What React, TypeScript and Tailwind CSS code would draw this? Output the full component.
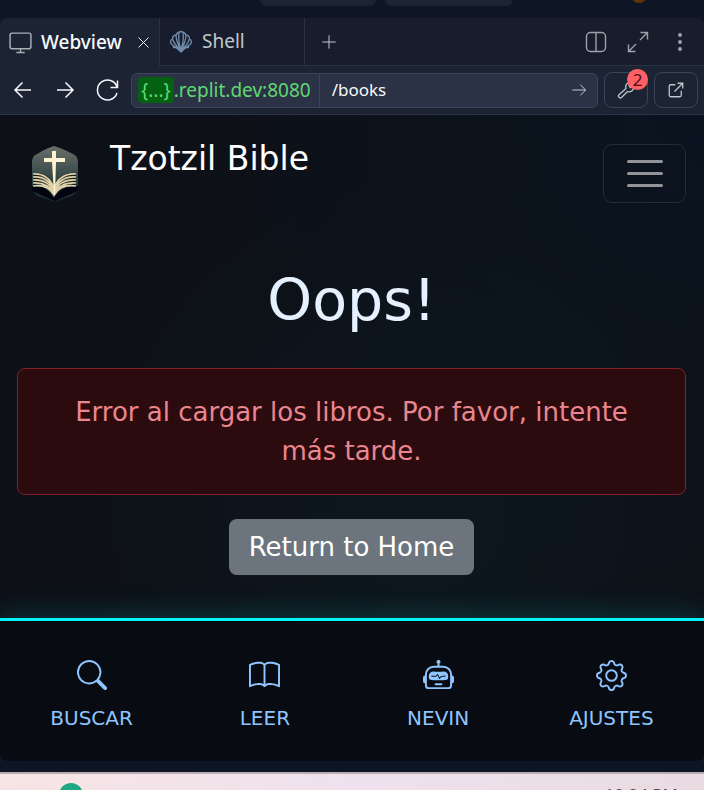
import type { ReactNode } from "react";
import { BsBook, BsGear, BsRobot, BsSearch } from "react-icons/bs";

const navItems = [
  { label: "BUSCAR", icon: <BsSearch size={30} /> },
  { label: "LEER", icon: <BsBook size={31} /> },
  { label: "NEVIN", icon: <BsRobot size={31} /> },
  { label: "AJUSTES", icon: <BsGear size={31} /> },
];

function Line({ size, children, width = 1.5 }: { size: number; children: ReactNode; width?: number }) {
  return (
    <svg
      width={size}
      height={size}
      viewBox="0 0 24 24"
      fill="none"
      stroke="currentColor"
      strokeWidth={width}
      aria-hidden="true"
      className="shrink-0"
    >
      {children}
    </svg>
  );
}

function ShellIcon() {
  return (
    <svg width="24" height="24" viewBox="0 0 24 24" fill="none" stroke="#718bab" strokeWidth="1.3" strokeLinejoin="round" aria-hidden="true" className="shrink-0">
      <path d="M12 21.500 7 17.500 4.500 17.500 4.500 15.500 Q1.500 14 1.500 11.500 Q2 9.500 3.500 9 Q3.500 5.500 7 5 Q8.500 2 12 1.500 Q15.500 2 17 5 Q20.500 5.500 20.500 9 Q22 9.500 22.500 11.500 Q22.500 14 19.500 15.500 V17.500 H17Z" />
      <path d="M11 20 4.500 15.500M11 19 Q5 14 3.500 9M11.500 19 Q7 11 7 5M11.500 18 Q9 10 10 3M12.500 18 Q15 10 14 3M12.500 19 Q17 11 17 5M13 19 Q19 14 20.500 9M13 20 19.500 15.500" />
      <path d="m8 18 4 4 4-4Z" fill="#718bab" />
    </svg>
  );
}

function BibleLogo() {
  return (
    <svg width="50" height="58" viewBox="0 0 50 58" aria-label="Tzotzil Bible" role="img" className="shrink-0">
      <defs>
        <linearGradient id="cover" x1="0" y1="0" x2="0" y2="1">
          <stop offset="0" stopColor="#697069" />
          <stop offset="0.5" stopColor="#3a4b4c" />
          <stop offset="1" stopColor="#10252c" />
        </linearGradient>
      </defs>
      <path d="M24 2 Q29 3 43 10 Q48 12 48 18 V47 L42 52 L25 58 L7 52 L2 46 V18 Q2 12 7 10 Q19 3 24 2Z" fill="url(#cover)" />
      <path d="M2 42 Q15 40 24 54 Q33 40 48 42 V47 L25 57 L2 47Z" fill="#02050f" />
      <path d="M3 29 Q19 27 24 43 Q30 27 46 29 V43 Q31 39 24 52 Q17 39 3 43Z" fill="#17211f" />
      <path d="M3 30 Q18 29 24 44 Q30 29 46 30M3 33 Q18 32 24 46 Q30 32 46 33M3 36 Q18 35 24 48 Q30 35 46 36M3 39 Q18 38 24 50 Q30 38 46 39M3 42 Q18 40 24 51 Q30 40 46 42" fill="none" stroke="#dfd1a9" strokeWidth="1.700" />
      <path d="M22 7h4v7h9v4h-9l-1 33h-1l-2-33h-8v-4h8Z" fill="#fff3cf" />
    </svg>
  );
}

function TabBar() {
  return (
    <div className="flex h-12 bg-[#171d2d] text-[19px] text-[#c2c8cc]">
      <div className="flex w-[159px] items-center bg-[#1c2333] pl-2 text-[#f5f9fc]">
        <button type="button" className="flex items-center gap-2 font-medium">
          <span className="text-[#a9afb5]">
            <Line size={25} width={1.4}>
              <rect x="2" y="3" width="20" height="15" rx="2" />
              <path d="M12 18v3M8 21.500h8" />
            </Line>
          </span>
          Webview
        </button>
        <button type="button" aria-label="Close tab" className="ml-auto pr-2">
          <Line size={15}>
            <path d="m4 4 16 16M20 4 4 20" />
          </Line>
        </button>
      </div>
      <button type="button" className="flex w-[146px] items-center gap-[9px] border-x border-b border-[#2b3245] pl-[9px]">
        <ShellIcon />
        Shell
      </button>
      <div className="flex flex-1 items-center gap-5 border-b border-[#2b3245] pr-3 pl-4">
        <button type="button" aria-label="New tab" className="mr-auto">
          <Line size={16}>
            <path d="M12 2v20M2 12h20" />
          </Line>
        </button>
        <div className="flex items-center gap-[18px] text-[#9da2a6]">
          <button type="button" aria-label="Split pane">
            <Line size={24} width={1.4}>
              <rect x="2.500" y="2.500" width="19" height="19" rx="4" />
              <path d="M12 2.500v19" />
            </Line>
          </button>
          <button type="button" aria-label="Maximize">
            <Line size={24} width={1.4}>
              <path d="M14.500 2.500h7v7M21.500 2.500 14 10M2.500 14.500v7h7M2.500 21.500 10 14" />
            </Line>
          </button>
          <button type="button" aria-label="More options">
            <svg width="24" height="24" viewBox="0 0 24 24" fill="currentColor" aria-hidden="true">
              <circle cx="12" cy="5" r="2" />
              <circle cx="12" cy="12" r="2" />
              <circle cx="12" cy="19" r="2" />
            </svg>
          </button>
        </div>
      </div>
    </div>
  );
}

function AddressBar() {
  return (
    <div className="flex h-[49px] items-center border-b border-[#2b3245] bg-[#1c2333] px-[6px] text-[#f5f9fc]">
      <div className="mr-3 flex gap-[18px] pl-[5px]">
        <button type="button" aria-label="Back">
          <Line size={24}>
            <path d="M20 12H4M11.500 4.500 4 12l7.500 7.500" />
          </Line>
        </button>
        <button type="button" aria-label="Forward">
          <Line size={24}>
            <path d="M4 12h16M12.500 4.500 20 12l-7.500 7.500" />
          </Line>
        </button>
        <button type="button" aria-label="Reload">
          <Line size={24}>
            <path d="M22.500 2.500v7h-7M22 9A10 10 0 1 0 22 15" />
          </Line>
        </button>
      </div>
      <div className="flex h-[35px] min-w-0 flex-1 items-center rounded-md border border-[#3c445c] bg-[#2b3245]">
        <span className="flex h-full items-center border-r border-[#3c445c] pr-2 pl-[6px] text-[19px] text-[#5fd873]">
          <span className="rounded bg-[#036111] px-[3px] leading-[26px]">{"{...}"}</span>.replit.dev:8080
        </span>
        <input aria-label="Path" defaultValue="/books" className="min-w-0 flex-1 bg-transparent px-3 text-[17px] outline-none" />
        <button type="button" aria-label="Go" className="px-[10px] text-[#c2c8cc]">
          <Line size={16}>
            <path d="M2 12h20M14 4l8 8-8 8" />
          </Line>
        </button>
      </div>
      <button type="button" aria-label="Developer tools" className="relative ml-[6px] flex h-9 w-11 items-center justify-center rounded-lg border border-[#3c445c] text-[#c2c8cc]">
        <Line size={18} width={1.7}>
          <path d="M3 18 12 10a6 6 0 0 1 7-8l-3 4 2 3 4-2a6 6 0 0 1-8 7L6 22a2.500 2.500 0 0 1-3-4Z" />
        </Line>
        <span className="absolute -top-1 -right-px flex h-[21px] w-[21px] items-center justify-center rounded-full bg-[#ff6166] text-[17px] text-[#520b0e]">2</span>
      </button>
      <button type="button" aria-label="Open in new window" className="ml-[6px] flex h-9 w-11 items-center justify-center rounded-lg border border-[#3c445c] text-[#c2c8cc]">
        <Line size={18} width={1.7}>
          <path d="M11 5H5a2 2 0 0 0-2 2v12a2 2 0 0 0 2 2h12a2 2 0 0 0 2-2v-6M10 14 21 3M14 3h7v7" />
        </Line>
      </button>
    </div>
  );
}

export default function App() {
  return (
    <div className="flex h-screen flex-col overflow-hidden bg-[#0e1525] font-['Noto_Sans',sans-serif]">
      <div className="flex h-[18px] items-start justify-end gap-[9px] overflow-hidden pr-[57px]">
        <div className="h-[6px] w-[116px] rounded-b-md bg-[#1c2333]" />
        <div className="h-[6px] w-32 rounded-b-md bg-[#1c2333]" />
        <div className="-mt-[13px] ml-[109px] h-4 w-4 rounded-full bg-[#633506]" />
      </div>
      <section className="flex flex-1 flex-col overflow-hidden rounded-lg">
        <TabBar />
        <AddressBar />
        <main className="flex flex-1 flex-col bg-[#0d1017] bg-[radial-gradient(circle_at_100%_0%,#0a1420,transparent_50%),radial-gradient(circle_at_60%_60%,#0d181e,transparent_60%)] font-['DejaVu_Sans',sans-serif]">
          <header className="flex items-start pt-[29px] pr-[18px] pl-[30px]">
            <BibleLogo />
            <span className="ml-[30px] text-[33px] leading-[30px] text-white">Tzotzil Bible</span>
            <button type="button" aria-label="Menu" className="ml-auto flex h-[59px] w-[83px] flex-col items-center justify-center gap-[9px] rounded-[9px] border border-[#282b31]">
              <span className="h-[3px] w-9 rounded-full bg-[#929498]" />
              <span className="h-[3px] w-9 rounded-full bg-[#929498]" />
              <span className="h-[3px] w-9 rounded-full bg-[#929498]" />
            </button>
          </header>
          <div className="flex flex-1 flex-col items-center pt-[63px] pr-[18px] pl-[17px] text-center">
            <h1 className="text-[57px] leading-[68px] text-[#e6f1ff]">Oops!</h1>
            <p role="alert" className="mt-[34px] w-full rounded-lg border border-[#842029] bg-[#2c0b0e] px-12 pt-6 pb-[23px] text-[26px] leading-[39px] text-[#ea868f]">
              Error al cargar los libros. Por favor, intente más tarde.
            </p>
            <a href="#home" className="mt-6 rounded-lg bg-[#6c757d] px-5 text-[26px] leading-[56px] text-white">
              Return to Home
            </a>
          </div>
          <nav className="flex border-t-[3px] border-[#00f3ff] bg-[#080b12] pt-[38px] pr-[6px] pb-[30px] pl-[5px] shadow-[0_0_30px_rgba(0,243,255,0.2)]">
            {navItems.map((item) => (
              <a key={item.label} href={"#" + item.label.toLowerCase()} className="flex flex-1 flex-col items-center text-[20px] text-[#8ec5ff]">
                <span className="flex h-8 items-center">{item.icon}</span>
                <span className="mt-[14px] leading-[26px]">{item.label}</span>
              </a>
            ))}
          </nav>
        </main>
      </section>
      <footer className="mt-[11px] flex h-[18px] items-start justify-between overflow-hidden border-t-2 border-[#b9adb1] bg-linear-to-r from-[#f7e4e4] via-[#efe2ee] to-[#e9dbe1] pr-[26px] pl-[59px]">
        <span className="mt-[9px] h-6 w-6 shrink-0 rounded-full bg-[#20a783]" />
        <span className="mt-[7px] text-[17px] leading-7 text-[#57494c]">10:24 PM</span>
      </footer>
    </div>
  );
}
